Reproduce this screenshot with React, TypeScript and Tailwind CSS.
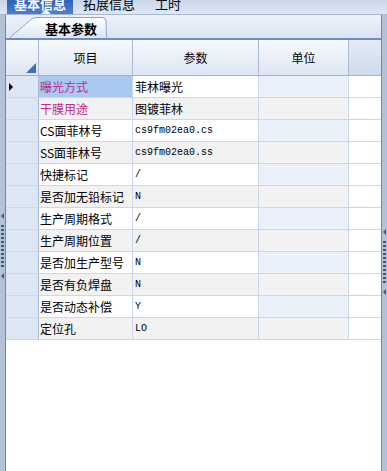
import React from "react";

type Row = { name: string; value: string; pink?: boolean; mono?: boolean };

const rows: Row[] = [
  { name: "曝光方式", value: "菲林曝光", pink: true },
  { name: "干膜用途", value: "图镀菲林", pink: true },
  { name: "CS面菲林号", value: "cs9fm02ea0.cs", mono: true },
  { name: "SS面菲林号", value: "cs9fm02ea0.ss", mono: true },
  { name: "快捷标记", value: "/", mono: true },
  { name: "是否加无铅标记", value: "N", mono: true },
  { name: "生产周期格式", value: "/", mono: true },
  { name: "生产周期位置", value: "/", mono: true },
  { name: "是否加生产型号", value: "N", mono: true },
  { name: "是否有负焊盘", value: "N", mono: true },
  { name: "是否动态补偿", value: "Y", mono: true },
  { name: "定位孔", value: "LO", mono: true },
];

const cjk = { fontFamily: '"Noto Sans CJK SC", "Noto Sans", sans-serif' };
const mono = { fontFamily: '"Liberation Mono", "DejaVu Sans Mono", monospace' };

function Splitter({ side }: { side: "left" | "right" }) {
  return (
    <div
      className={`w-[6px] shrink-0 bg-[#b4c2d8] flex flex-col items-center ${
        side === "left" ? "border-r border-[#6f86ad] pt-[198px]" : "border-l border-[#6f86ad] pt-[214px]"
      }`}
    >
      <div className="w-0 h-0 border-y-[3px] border-y-transparent border-r-[3px] border-r-[#3d5686]" />
      <div className="flex flex-col gap-[2px] mt-[6px]">
        {Array.from({ length: 11 }).map((_, i) => (
          <div key={i} className="w-[3px] h-[2px] bg-[#3d5686]" />
        ))}
      </div>
      <div className="w-0 h-0 mt-[6px] border-y-[3px] border-y-transparent border-r-[3px] border-r-[#3d5686]" />
    </div>
  );
}

export default function App() {
  return (
    <div className="w-[387px] h-[471px] overflow-hidden bg-white flex flex-col" style={cjk}>
      {/* top tabs, cut off at the top */}
      <div className="h-[15px] shrink-0 flex items-end bg-gradient-to-b from-[#c9d6ea] to-[#dfe7f3] border-b border-[#aab9d2] overflow-hidden">
        <div className="relative ml-[7px] w-[66px] h-[15px] bg-gradient-to-b from-[#2f5fb3] to-[#4a7fd0] flex items-end justify-center">
          <span className="text-white font-bold text-[13px] leading-none mb-[4px]">基本信息</span>
          <div className="absolute bottom-0 left-[34px] w-0 h-0 border-x-[5px] border-x-transparent border-b-[5px] border-b-[#eef3fa]" />
        </div>
        <span className="ml-[10px] text-black text-[13px] leading-none mb-[4px]">拓展信息</span>
        <span className="ml-[20px] text-black text-[13px] leading-none mb-[4px]">工时</span>
      </div>

      <div className="flex-1 flex min-h-0">
        <Splitter side="left" />

        <div className="flex-1 flex flex-col min-w-0">
          {/* inner tab strip */}
          <div className="h-[23px] shrink-0 flex items-end bg-gradient-to-b from-[#eef3fa] to-[#d9e4f3]">
            <div className="relative ml-[3px] h-[21px] w-[98px] flex items-end">
              <svg className="absolute left-0 top-0" width="98" height="21" viewBox="0 0 98 21">
                <defs>
                  <linearGradient id="tabg" x1="0" y1="0" x2="0" y2="1">
                    <stop offset="0" stopColor="#ffffff" />
                    <stop offset="1" stopColor="#dce7f6" />
                  </linearGradient>
                </defs>
                <path d="M0.5 21 L22 2.5 Q24 0.5 27 0.5 L93 0.5 Q97 0.5 97 4 L97.5 21" fill="url(#tabg)" stroke="#8aa3cb" />
              </svg>
              <span className="relative ml-[36px] mb-[3px] text-[13px] font-bold leading-none text-black">基本参数</span>
            </div>
          </div>

          {/* grid */}
          <div className="flex-1 flex flex-col border-t-2 border-[#6d8cc2] bg-white">
            <div className="flex h-[36px] shrink-0 bg-gradient-to-b from-[#f7f9fd] to-[#dde6f3] border-b border-[#9db3d6] text-[12px] text-black">
              <div className="relative w-[33px] shrink-0 border-r border-[#a8b9d3]">
                <div className="absolute right-[2px] bottom-[2px] w-0 h-0 border-l-[10px] border-l-transparent border-b-[10px] border-b-[#3a6fc4]" />
              </div>
              <div className="w-[94px] shrink-0 flex items-center justify-center border-r border-[#a8b9d3]">项目</div>
              <div className="w-[126px] shrink-0 flex items-center justify-center border-r border-[#a8b9d3]">参数</div>
              <div className="w-[90px] shrink-0 flex items-center justify-center border-r border-[#a8b9d3]">单位</div>
              <div className="flex-1 bg-gradient-to-b from-[#e4ebf5] to-[#cfdbec]" />
            </div>

            {rows.map((r, i) => {
              const odd = i % 2 === 1;
              return (
                <div key={r.name} className="flex h-[22px] shrink-0 border-b border-[#c9d7ec] text-[12px] leading-none">
                  <div className="w-[33px] shrink-0 bg-[#dce6f4] border-r border-[#a8b9d3] flex items-center pl-[3px]">
                    {i === 0 && (
                      <div className="w-0 h-0 border-y-[4px] border-y-transparent border-l-[4px] border-l-black" />
                    )}
                  </div>
                  <div
                    className={`w-[94px] shrink-0 flex items-center pl-[1px] border-r border-[#c9d7ec] ${
                      i === 0 ? "bg-[#a9c9f0]" : odd ? "bg-[#f2f2f2]" : "bg-white"
                    } ${r.pink ? "text-[#c2268f]" : "text-black"}`}
                  >
                    {r.name}
                  </div>
                  <div
                    className={`w-[126px] shrink-0 flex items-center pl-[2px] border-r border-[#c9d7ec] text-black ${
                      odd ? "bg-[#f2f2f2]" : "bg-white"
                    }`}
                    style={r.mono ? { ...mono, fontSize: "10px" } : undefined}
                  >
                    {r.value}
                  </div>
                  <div
                    className={`w-[90px] shrink-0 border-r border-[#c9d7ec] ${odd ? "bg-[#f2f2f2]" : "bg-[#eaf1fb]"}`}
                  />
                  <div className="flex-1 bg-white" />
                </div>
              );
            })}
            <div className="flex-1" />
          </div>
        </div>

        <Splitter side="right" />
      </div>
    </div>
  );
}
